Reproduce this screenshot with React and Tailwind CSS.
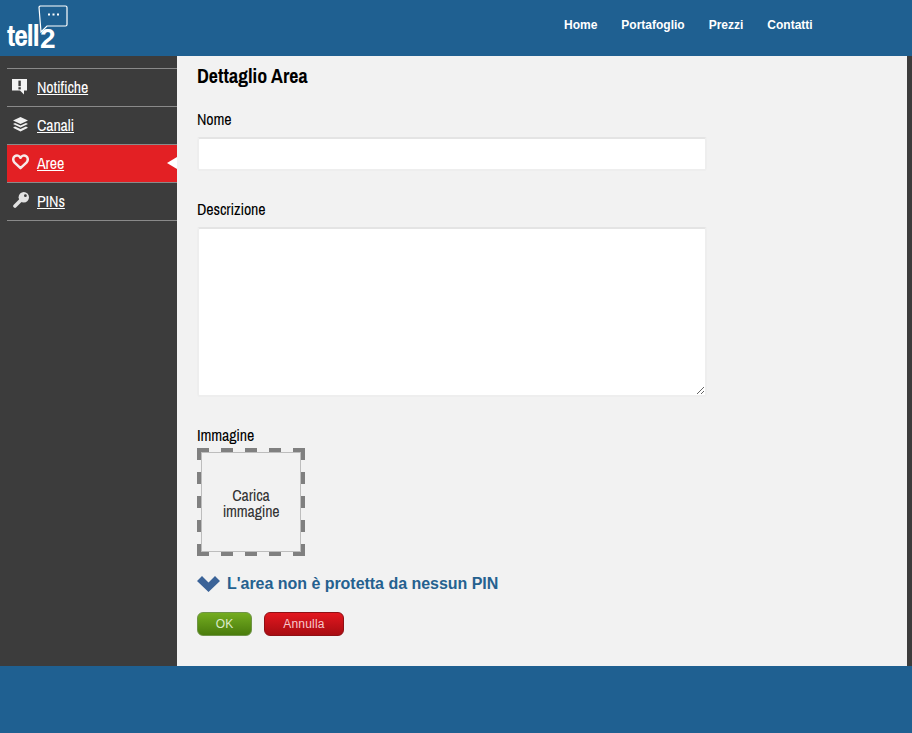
import React from "react";

const narrow = "font-['Archivo_Narrow','Liberation_Sans_Narrow','Liberation_Sans',sans-serif]";

const NoticeIcon = () => (
  <svg className="mt-[1px]" width="15" height="16" viewBox="0 0 15 16">
    <path d="M0 0H15V11.5H12V15.5L8 11.5H0Z" fill="#f4f4f4" />
    <rect x="6.4" y="1.6" width="2.4" height="5.6" fill="#3c3c3c" />
    <rect x="6.4" y="8.2" width="2.4" height="2.2" fill="#3c3c3c" />
  </svg>
);

const LayersIcon = () => (
  <svg className="ml-[1px] mt-[1px]" width="15" height="15" viewBox="0 0 15 15" fill="#f0f0f0">
    <path d="M7.5 0L15 3.5L7.5 7L0 3.5Z" />
    <path d="M2 5.9L7.5 8.4L13 5.9L15 7.1L7.5 10.6L0 7.1Z" />
    <path d="M2 9.6L7.5 12.1L13 9.6L15 10.8L7.5 14.6L0 10.8Z" />
  </svg>
);

const HeartIcon = () => (
  <svg width="17" height="16" viewBox="0 0 17 16" fill="none">
    <path
      d="M8.5 14.2L2.6 8.6C.6 6.5.9 3.6 2.7 2.3C4.7.9 7.2 1.5 8.5 3.8C9.8 1.5 12.3.9 14.3 2.3C16.1 3.6 16.4 6.5 14.4 8.6Z"
      stroke="#f7eaea"
      strokeWidth="2.5"
      strokeLinejoin="round"
    />
  </svg>
);

const KeyIcon = () => (
  <svg className="ml-[1px]" width="16" height="16" viewBox="0 0 16 16">
    <circle cx="10.8" cy="5.2" r="5.2" fill="#e2e2e2" />
    <path d="M7.5 8.5L2 14" stroke="#e2e2e2" strokeWidth="3.6" strokeLinecap="round" />
    <circle cx="12.4" cy="3.7" r="1.4" fill="#3c3c3c" />
  </svg>
);

const menu = [
  { label: "Notifiche", icon: <NoticeIcon /> },
  { label: "Canali", icon: <LayersIcon /> },
  { label: "Aree", icon: <HeartIcon />, active: true },
  { label: "PINs", icon: <KeyIcon /> },
];

const Logo = () => (
  <div className="relative w-[70px] h-14 text-white">
    <svg className="absolute left-[38px] top-[5px]" width="31" height="28" viewBox="0 0 31 28" fill="none">
      <path
        d="M2 1H27.5a1.5 1.5 0 0 1 1.5 1.5V19.5a1.5 1.5 0 0 1-1.5 1.5H9L3 27L1 2Z"
        stroke="white"
        strokeWidth="1.2"
        fill="#1f6091"
      />
      <rect x="10" y="8.5" width="2" height="2" fill="white" />
      <rect x="14.5" y="8.5" width="2" height="2" fill="white" />
      <rect x="19" y="8.5" width="2" height="2" fill="white" />
    </svg>
    <span className={`absolute left-[7px] top-[19px] text-[30px] leading-8 font-bold tracking-[-1px] ${narrow}`}>
      tell
    </span>
    <span className="absolute left-[40px] top-[23px] text-[28px] leading-8 font-bold font-['Liberation_Sans',sans-serif]">
      2
    </span>
  </div>
);

const App = () => {
  return (
    <div className="w-[912px] h-[733px] flex flex-col bg-[#1f6091] overflow-hidden">
      <header className="h-14 flex shrink-0">
        <div className="w-[564px]">
          <Logo />
        </div>
        <nav className="flex gap-6 pt-[18px] text-xs leading-[15px] font-bold text-white font-['Liberation_Sans',sans-serif]">
          <a>Home</a>
          <a>Portafoglio</a>
          <a>Prezzi</a>
          <a>Contatti</a>
        </nav>
      </header>

      <div className={`h-[610px] flex bg-[#3c3c3c] ${narrow}`}>
        <aside className="w-[177px] shrink-0 pl-[7px] pt-3">
          <ul className="border-t border-[#8a8a8a]">
            {menu.map((item) => (
              <li
                key={item.label}
                className={`relative h-[38px] flex items-center border-b border-[#8a8a8a] text-white ${
                  item.active ? "bg-[#e32024]" : ""
                }`}
              >
                <span className="w-[30px] pl-[5px] flex -mt-[3px]">{item.icon}</span>
                <a className="text-base tracking-[-0.15px] underline -mt-[2px]">{item.label}</a>
                {item.active && (
                  <span className="absolute right-0 top-[12px] border-y-[6px] border-y-transparent border-r-[10px] border-r-white" />
                )}
              </li>
            ))}
          </ul>
        </aside>

        <main className="w-[730px] bg-[#f2f2f2] pl-5 pt-2 text-black">
          <h2 className="text-xl leading-6 font-bold">Dettaglio Area</h2>

          <label className="block mt-[20px] text-base tracking-[-0.15px] leading-[22px]">Nome</label>
          <input
            type="text"
            className="block mt-[7px] w-[510px] h-[34px] bg-white border-2 border-[#eeeeee] border-t-[#e4e4e4] rounded-[3px]"
          />

          <label className="block mt-[27px] text-base tracking-[-0.15px] leading-[22px]">Descrizione</label>
          <textarea className="block mt-[7px] w-[510px] h-[170px] bg-white border-2 border-[#eeeeee] border-t-[#e4e4e4] rounded-[3px]" />

          <label className="block mt-[27px] text-base tracking-[-0.15px] leading-[22px]">Immagine</label>
          <div className="relative mt-[2px] w-[108px] h-[108px] p-1">
            <svg className="absolute inset-0" width="108" height="108" viewBox="0 0 108 108" stroke="#808080" strokeWidth="4" strokeDasharray="12 12">
              <line x1="0" y1="2" x2="108" y2="2" />
              <line x1="0" y1="106" x2="108" y2="106" />
              <line x1="2" y1="0" x2="2" y2="108" />
              <line x1="106" y1="0" x2="106" y2="108" />
            </svg>
            <div className="w-[100px] h-[100px] pt-[2px] border border-[#bdbdbd] flex items-center justify-center text-center text-base tracking-[-0.2px] leading-4 text-[#333333]">
              <span>
                Carica
                <br />
                immagine
              </span>
            </div>
          </div>

          <div className="mt-[18px] flex items-center gap-[7px] font-['Liberation_Sans',sans-serif]">
            <svg width="23" height="18" viewBox="0 0 23 18">
              <polygon points="0,6 5,1 11.5,7.5 18,1 23,6 11.5,17" fill="#3b6398" />
            </svg>
            <span className="text-base tracking-[-0.03px] leading-5 font-bold text-[#25618f]">
              L'area non è protetta da nessun PIN
            </span>
          </div>

          <div className="mt-[18px] flex gap-3 font-['Liberation_Sans',sans-serif]">
            <button className="w-[55px] h-6 rounded-md bg-gradient-to-b from-[#74ad20] to-[#4a7c0c] border border-[#6f9447] text-xs text-[#dcebc8]">
              OK
            </button>
            <button className="w-[80px] h-6 rounded-md bg-gradient-to-b from-[#e3171f] to-[#a80c12] border border-[#8f1015] text-xs tracking-[0.2px] text-[#f7c9cb]">
              Annulla
            </button>
          </div>
        </main>

        <div className="w-[5px]" />
      </div>

      <footer className="flex-1" />
    </div>
  );
};

export default App;
